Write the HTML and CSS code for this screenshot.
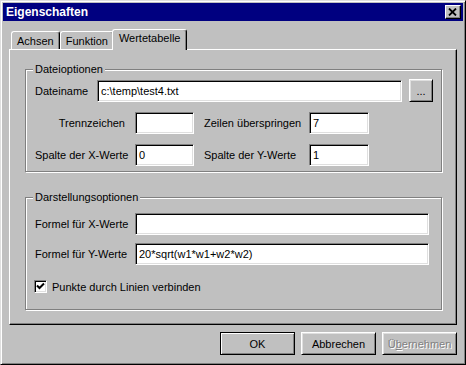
FILE: index.html
```html
<!DOCTYPE html>
<html lang="de">
<head>
    <meta charset="UTF-8">
    <title>Eigenschaften</title>
    <link rel="stylesheet" href="styles.css">
</head>
<body>
    <div class="window">
        <div class="titlebar">
            <span>Eigenschaften</span>
            <button class="close" type="button">
                <svg width="10" height="8" viewBox="0 0 10 8"><path d="M1 0.5 L8 7.5 M8 0.5 L1 7.5" stroke="#000" stroke-width="1.8"/></svg>
            </button>
        </div>

        <div class="content">
            <div class="tabs">
                <div class="tab">Achsen</div>
                <div class="tab">Funktion</div>
                <div class="tab active">Wertetabelle</div>
            </div>

            <div class="panel">
                <fieldset class="group first">
                    <legend>Dateioptionen</legend>
                    <div class="file-row">
                        <label class="file-label">Dateiname</label>
                        <div class="edit wide">c:\temp\test4.txt</div>
                        <button class="btn browse" type="button">...</button>
                    </div>
                    <div class="grid">
                        <label class="right">Trennzeichen</label>
                        <div class="edit"></div>
                        <label>Zeilen überspringen</label>
                        <div class="edit">7</div>

                        <label class="right">Spalte der X-Werte</label>
                        <div class="edit">0</div>
                        <label>Spalte der Y-Werte</label>
                        <div class="edit">1</div>
                    </div>
                </fieldset>

                <fieldset class="group second">
                    <legend>Darstellungsoptionen</legend>
                    <div class="formula-row">
                        <label>Formel für X-Werte</label>
                        <div class="edit"></div>
                    </div>
                    <div class="formula-row">
                        <label>Formel für Y-Werte</label>
                        <div class="edit">20*sqrt(w1*w1+w2*w2)</div>
                    </div>
                    <div class="check-row">
                        <span class="checkbox">
                            <svg width="9" height="9" viewBox="0 0 9 9"><path d="M1 3.5 L3.5 6 L8 1.5" stroke="#000" stroke-width="2" fill="none"/></svg>
                        </span>
                        <span>Punkte durch Linien verbinden</span>
                    </div>
                </fieldset>
            </div>

            <div class="buttons">
                <button class="btn default" type="button">OK</button>
                <button class="btn" type="button">Abbrechen</button>
                <button class="btn disabled" type="button">Ü<u>b</u>ernehmen</button>
            </div>
        </div>
    </div>
</body>
</html>
```

FILE: styles.css
```css
body {
    margin: 0;
    background-color: #c0c0c0;
    font-family: "Liberation Sans", Arial, sans-serif;
    font-size: 11px;
    color: #000;
}
.window {
    width: 466px;
    height: 365px;
    box-sizing: border-box;
    padding: 2px;
    background-color: #c0c0c0;
    border: 1px solid;
    border-color: #dfdfdf #000 #000 #dfdfdf;
    box-shadow: inset 1px 1px #fff, inset -1px -1px #808080;
}
.titlebar {
    height: 18px;
    display: flex;
    align-items: center;
    justify-content: space-between;
    padding: 0 2px 0 3px;
    background-color: #000080; /* dunkelblau */
    color: #fff;
    font-size: 12px;
    font-weight: bold;
}
.close {
    width: 16px;
    height: 14px;
    padding: 0;
    display: flex;
    align-items: center;
    justify-content: center;
    background-color: #c0c0c0;
    border: 1px solid;
    border-color: #fff #000 #000 #fff;
    box-shadow: inset -1px -1px #808080;
}
.content {
    padding: 8px 0 0 6px;
}

/* Karteireiter */
.tabs {
    display: flex;
    align-items: flex-end;
    height: 20px;
    padding-left: 2px;
}
.tab {
    height: 18px;
    box-sizing: border-box;
    padding: 2px 5px 0 5px;
    border-top: 1px solid #fff;
    border-left: 1px solid #fff;
    border-right: 1px solid #000;
    border-radius: 3px 3px 0 0;
    box-shadow: inset -1px 0 #808080;
    line-height: 14px;
}
.tab.active {
    position: relative;
    z-index: 1;
    height: 21px;
    margin: 0 -2px -1px -2px;
    padding: 1px 6px 0 6px;
    background-color: #c0c0c0;
}
.panel {
    width: 448px;
    height: 276px;
    box-sizing: border-box;
    padding: 13px 14px 0 15px;
    border: 1px solid;
    border-color: #fff #000 #000 #fff;
    box-shadow: inset -1px -1px #808080;
}

/* Gruppenrahmen */
.group {
    margin: 0;
    box-sizing: border-box;
    padding: 0 8px 0 9px;
    border: 1px solid #808080;
    box-shadow: inset 1px 1px #fff, 1px 1px #fff;
}
.group legend {
    padding: 0 2px;
    margin-left: -2px;
    line-height: 13px;
    background-color: #c0c0c0;
}
.group.first {
    height: 109px;
    padding-top: 3px;
}
.group.second {
    height: 119px;
    margin-top: 19px;
    padding-top: 9px;
}
label {
    white-space: nowrap;
}
.edit {
    height: 22px;
    box-sizing: border-box;
    padding: 3px 3px 0 3px;
    background-color: #fff;
    border: 1px solid;
    border-color: #808080 #fff #fff #808080;
    box-shadow: inset 1px 1px #000, inset -1px -1px #dfdfdf;
    line-height: 14px;
    white-space: nowrap;
}
.file-row {
    display: flex;
    align-items: center;
}
.file-label {
    width: 62px;
}
.edit.wide {
    width: 305px;
}
.btn {
    width: 75px;
    height: 23px;
    padding: 0;
    background-color: #c0c0c0;
    border: 1px solid;
    border-color: #fff #000 #000 #fff;
    box-shadow: inset 1px 1px #dfdfdf, inset -1px -1px #808080;
    font-family: inherit;
    font-size: 11px;
    color: #000;
}
.btn.browse {
    width: 24px;
    margin-left: 7px;
}
.grid {
    display: grid;
    grid-template-columns: 90px 59px 95px 60px;
    grid-auto-rows: 22px;
    column-gap: 10px;
    row-gap: 10px;
    align-items: center;
    margin-top: 10px;
}
.grid .right {
    text-align: right;
}
.formula-row {
    display: flex;
    align-items: center;
    margin-bottom: 8px;
}
.formula-row label {
    width: 100px;
}
.formula-row .edit {
    width: 294px;
}
.check-row {
    display: flex;
    align-items: center;
    gap: 5px;
    margin-top: 15px;
    margin-left: -1px;
}
.checkbox {
    width: 13px;
    height: 13px;
    box-sizing: border-box;
    display: flex;
    align-items: center;
    justify-content: center;
    background-color: #fff;
    border: 1px solid;
    border-color: #808080 #fff #fff #808080;
    box-shadow: inset 1px 1px #000, inset -1px -1px #dfdfdf;
}

/* Schaltflächen unten */
.buttons {
    display: flex;
    justify-content: flex-end;
    gap: 6px;
    width: 448px;
    margin-top: 7px;
}
.btn.default {
    border-color: #000;
    box-shadow: inset 1px 1px #fff, inset -1px -1px #808080;
}
.btn.disabled {
    color: #808080;
    text-shadow: 1px 1px #fff;
}
```
